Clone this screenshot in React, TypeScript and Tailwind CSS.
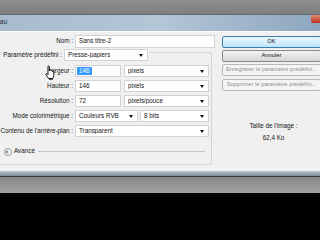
import React from 'react';

const font = { fontFamily: '"Liberation Sans", Arial, sans-serif' };

function Arrow() {
  return <span className="w-0 h-0 border-l-[2px] border-r-[2px] border-t-[3px] border-l-transparent border-r-transparent border-t-[#111]" />;
}

function Field({ w, children, select }: { w: string; children?: React.ReactNode; select?: boolean }) {
  return (
    <div className={`${w} h-[12px] bg-white border border-[#d2d2d2] flex items-center justify-between pl-[3px] pr-[4px] leading-none`}>
      <span className="truncate">{children}</span>
      {select && <Arrow />}
    </div>
  );
}

function Label({ w, children }: { w: string; children: React.ReactNode }) {
  return <div className={`${w} shrink-0 text-right pr-[2px] whitespace-nowrap leading-none`}>{children}</div>;
}

function HandCursor() {
  return (
    <svg width="11" height="15" viewBox="0 0 11 15" className="absolute left-[45px] top-[0px]">
      <path
        d="M3 1.5 C3 0.7 4.4 0.7 4.4 1.5 L4.4 6 L4.6 5 C4.8 4.3 6 4.3 6 5.2 L6 6 C6.2 5.3 7.4 5.3 7.4 6.2 L7.4 6.8 C7.7 6.2 8.8 6.3 8.8 7.2 L8.8 10.5 C8.8 12 8 13 7.6 13.6 L3.6 13.6 C3 12.6 1.8 11 1 9.6 C0.6 8.8 1.4 8.2 2 8.8 L3 9.8 Z"
        fill="#fff"
        stroke="#000"
        strokeWidth="0.9"
        strokeLinejoin="round"
      />
      <path d="M4 14 L8 14" stroke="#000" strokeWidth="1.2" />
    </svg>
  );
}

function Button({ children, kind }: { children: React.ReactNode; kind: 'default' | 'normal' | 'disabled' }) {
  const cls =
    kind === 'default'
      ? 'border-[#3c7fb1] bg-gradient-to-b from-[#eaf6fd] to-[#bee6fd] text-[#111]'
      : kind === 'normal'
      ? 'border-[#8a8a8a] bg-gradient-to-b from-[#f2f2f2] to-[#d6d6d6] text-[#111]'
      : 'border-[#b5b9bc] bg-[#f4f4f4] text-[#8d8d8d]';
  return (
    <div className={`w-[99px] h-[12px] border rounded-[2px] flex items-center justify-center whitespace-nowrap leading-none text-[5.8px] ${cls}`}>
      {children}
    </div>
  );
}

export default function App() {
  return (
    <div className="w-[320px] h-[240px] overflow-hidden flex flex-col text-[6.3px] text-[#141414]" style={font}>
      {/* desktop strip above the window */}
      <div className="h-[15px] shrink-0 bg-gradient-to-b from-[#8f8f8f] to-[#7e7e7e] border-b border-[#5f6a73]" />

      {/* title bar */}
      <div className="h-[16px] shrink-0 flex items-start justify-between bg-gradient-to-r from-[#a8bbcd] via-[#b4c5d6] to-[#8ea7bf]">
        <span className="ml-[-19px] mt-[4px] text-[6.5px] leading-none text-[#1b2633]">Nouveau</span>
        <div className="w-[9px] h-[8px] rounded-bl-[2px] bg-gradient-to-b from-[#e0866f] to-[#b8331f]" />
      </div>

      {/* dialog body */}
      <div className="h-[140px] shrink-0 bg-[#f0f0f0] border-t border-[#fafafa] flex">
        <div className="w-[222px] shrink-0 pt-[3px]">
          <div className="flex items-center h-[13px]">
            <Label w="w-[75px]">Nom :</Label>
            <div className="w-[140px] h-[13px] bg-white border border-[#d2d2d2] flex items-center pl-[3px] leading-none">Sans titre-2</div>
          </div>

          <div className="mt-[4px] w-[212px] border-t border-r border-b border-[#cdd3d7] rounded-r-[2px] pb-[8px]">
            <div className="-mt-[4px] w-[150px] flex items-center h-[12px] bg-[#f0f0f0]">
              <Label w="w-[64px]">Paramètre prédéfini :</Label>
              <Field w="w-[84px]" select>Presse-papiers</Field>
            </div>

            <div className="mt-[4px] flex flex-col gap-[3px]">
              <div className="relative flex items-center h-[12px]">
                <Label w="w-[75px]">Largeur :</Label>
                <div className="w-[46px] h-[12px] bg-white border border-[#d2d2d2] flex items-center pl-[1px] leading-none">
                  <span className="bg-[#3399ff] text-white px-[2px] py-[1px]">146</span>
                </div>
                <div className="w-[3px]" />
                <Field w="w-[85px]" select>pixels</Field>
                <HandCursor />
              </div>
              <div className="flex items-center h-[12px]">
                <Label w="w-[75px]">Hauteur :</Label>
                <Field w="w-[46px]">146</Field>
                <div className="w-[3px]" />
                <Field w="w-[85px]" select>pixels</Field>
              </div>
              <div className="flex items-center h-[12px]">
                <Label w="w-[75px]">Résolution :</Label>
                <Field w="w-[46px]">72</Field>
                <div className="w-[3px]" />
                <Field w="w-[85px]" select>pixels/pouce</Field>
              </div>
              <div className="flex items-center h-[12px]">
                <Label w="w-[75px]">Mode colorimétrique :</Label>
                <Field w="w-[63px]" select>Couleurs RVB</Field>
                <div className="w-[2px]" />
                <Field w="w-[69px]" select>8 bits</Field>
              </div>
              <div className="flex items-center h-[12px]">
                <Label w="w-[75px]">Contenu de l'arrière-plan :</Label>
                <Field w="w-[134px]" select>Transparent</Field>
              </div>
            </div>

            <div className="mt-[10px] h-[9px] flex items-center pl-[4px] pr-[6px]">
              <span className="w-[8px] h-[8px] rounded-full border border-[#9a9a9a] bg-gradient-to-b from-white to-[#e2e2e2] flex items-center justify-center text-[6px] leading-none rotate-90">»</span>
              <span className="ml-[2px] leading-none">Avancé</span>
              <span className="ml-[3px] flex-1 border-t border-[#bfc5c9]" />
            </div>
          </div>
        </div>

        <div className="flex-1 pt-[4px] flex flex-col">
          <Button kind="default">OK</Button>
          <div className="mt-[2px]">
            <Button kind="normal">Annuler</Button>
          </div>
          <div className="mt-[2px]">
            <Button kind="disabled">Enregistrer le paramètre prédéfini...</Button>
          </div>
          <div className="mt-[3px]">
            <Button kind="disabled">Supprimer le paramètre prédéfini...</Button>
          </div>
          <div className="mt-[32px] pl-[4px] flex flex-col items-center gap-[6px] leading-none">
            <span>Taille de l'image :</span>
            <span>62,4 Ko</span>
          </div>
        </div>
      </div>

      {/* window bottom frame */}
      <div className="h-[5px] shrink-0 bg-gradient-to-b from-[#bcc8d0] to-[#7b8a96]" />
      <div className="h-px shrink-0 bg-[#3a3a3a]" />
      <div className="h-[16px] shrink-0 bg-gradient-to-b from-[#858585] to-[#a3a3a3]" />
      <div className="flex-1 bg-black" />
    </div>
  );
}
